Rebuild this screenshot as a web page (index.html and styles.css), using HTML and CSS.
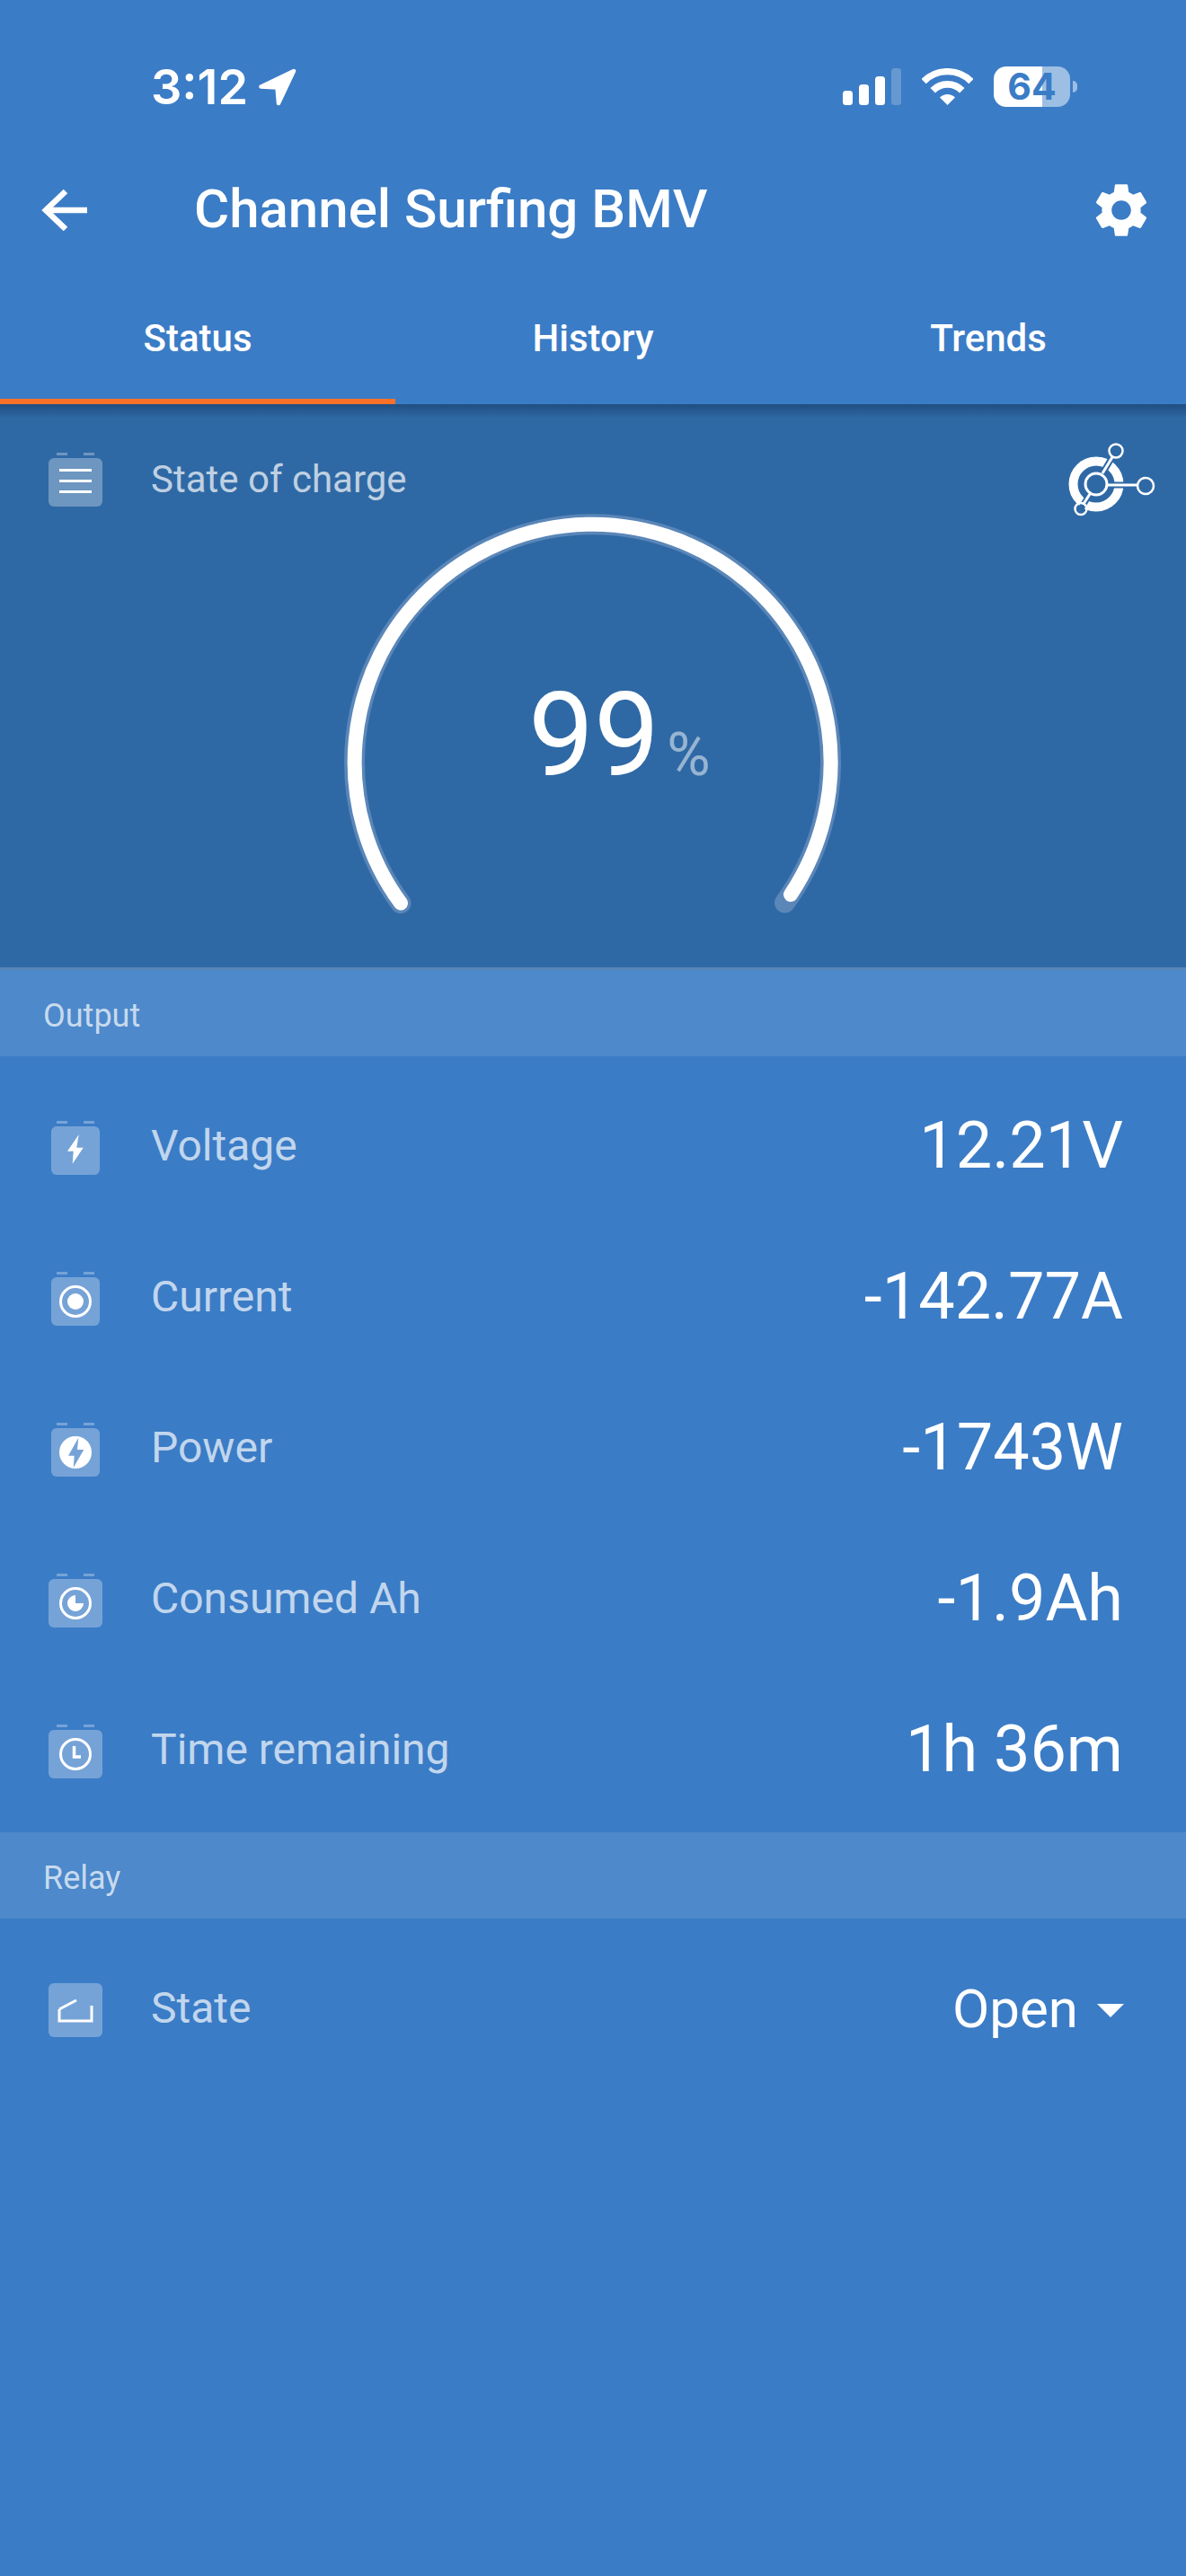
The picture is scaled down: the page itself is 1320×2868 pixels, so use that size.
FILE: index.html
```html
<!DOCTYPE html>
<html lang="en">
<head>
<meta charset="utf-8">
<title>Channel Surfing BMV</title>
<link rel="stylesheet" href="styles.css">
</head>
<body>
<div class="screen">
  <header class="topbar">
    <div class="statusbar">
      <div class="clock">
        <span class="time">3:12</span>
        <svg class="loc" width="42" height="42" viewBox="0 0 42 42"><path d="M39 3 2.500 20.500 20.500 21.500 22 39Z" fill="#fff" stroke="#fff" stroke-width="4.500" stroke-linejoin="round"/></svg>
      </div>
      <div class="sysicons">
        <div class="signal"><i class="b1"></i><i class="b2"></i><i class="b3"></i><i class="b4"></i></div>
        <svg class="wifi" width="57" height="41" viewBox="0 0 57 41"><g fill="none" stroke="#fff"><path d="M2.100 14.600A37.300 37.300 0 0 1 54.900 14.600" stroke-width="7.400"/><path d="M12.200 24.700A23 23 0 0 1 44.800 24.700" stroke-width="7.700"/></g><path d="M28.500 41 20 32.500A12 12 0 0 1 37 32.500Z" fill="#fff"/></svg>
        <div class="batt"><div class="batt-body"><span class="batt-num">64</span></div><div class="batt-nub"></div></div>
      </div>
    </div>
    <div class="appbar">
      <svg class="back" width="60" height="60" viewBox="0 0 60 60"><path d="M55 30H9M31 9 9 30l0 0 22 21" fill="none" stroke="#fff" stroke-width="6.500"/></svg>
      <h1 class="title">Channel Surfing BMV</h1>
      <svg class="gear" width="72" height="72" viewBox="0 0 24 24"><path fill="#fff" d="M19.140 12.940c.04-.3.06-.61.06-.94 0-.32-.02-.64-.07-.94l2.030-1.580c.18-.14.23-.41.12-.61l-1.920-3.320c-.12-.22-.37-.29-.59-.22l-2.390.96c-.5-.38-1.030-.7-1.620-.94l-.36-2.540c-.04-.24-.24-.41-.48-.41h-3.840c-.24 0-.43.17-.47.41l-.36 2.540c-.59.24-1.130.57-1.620.94l-2.390-.96c-.22-.08-.47 0-.59.22L2.740 8.870c-.12.21-.08.47.12.61l2.030 1.580c-.05.3-.09.63-.09.94s.02.64.07.94l-2.030 1.580c-.18.14-.23.41-.12.61l1.920 3.320c.12.22.37.29.59.22l2.390-.96c.5.38 1.030.7 1.620.94l.36 2.540c.05.24.24.41.48.41h3.840c.24 0 .44-.17.47-.41l.36-2.540c.59-.24 1.130-.56 1.620-.94l2.390.96c.22.08.47 0 .59-.22l1.920-3.320c.12-.22.07-.47-.12-.61l-2.010-1.580zM12 15.600c-1.980 0-3.600-1.620-3.600-3.600s1.620-3.600 3.600-3.600 3.600 1.620 3.600 3.600-1.620 3.600-3.600 3.600z"/></svg>
    </div>
    <nav class="tabs">
      <div class="tab tab-active">Status</div>
      <div class="tab">History</div>
      <div class="tab">Trends</div>
    </nav>
  </header>

  <section class="soc">
    <div class="soc-head">
      <div class="icon">
        <div class="terms"><i></i><i></i></div>
        <div class="box box-wide box-lines"><i></i><i></i><i></i></div>
      </div>
      <span class="label">State of charge</span>
    </div>
    <svg class="logo" width="100" height="90" viewBox="0 0 100 90">
      <circle cx="34" cy="49" r="25.500" fill="none" stroke="#fff" stroke-width="10"/>
      <g fill="none" stroke="#2f69a5" stroke-width="7">
        <path d="M34 49 56 12"/><path d="M34 50H89"/><path d="M34 49 16.500 77"/>
      </g>
      <g fill="none" stroke="#fff">
        <path d="M41 37 52 19" stroke-width="3"/><path d="M47 50H80" stroke-width="3"/><path d="M27 60 20 71" stroke-width="3"/>
        <circle cx="34" cy="49" r="12" stroke-width="3"/>
        <circle cx="56" cy="12" r="7.500" stroke-width="2.500"/>
        <circle cx="89" cy="51" r="9" stroke-width="2.500"/>
        <circle cx="17" cy="76.500" r="6.500" stroke-width="2.500"/>
      </g>
    </svg>
    <div class="gauge">
      <svg width="600" height="480" viewBox="0 0 600 480">
        <path d="M86 441.600A265 265 0 1 1 513.500 441" fill="none" stroke="#5a86b8" stroke-width="23" stroke-linecap="round"/>
        <path d="M86 441.600A265 265 0 1 1 520 432" fill="none" stroke="#fff" stroke-width="16" stroke-linecap="round"/>
      </svg>
      <div class="gauge-value"><span class="pct-num">99</span><span class="pct-unit">%</span></div>
    </div>
  </section>

  <div class="band">Output</div>
  <section class="list">
    <div class="row">
      <div class="icon">
        <div class="terms"><i></i><i></i></div>
        <div class="box"><svg width="54" height="54" viewBox="0 0 54 54"><path d="M30.700 9.300 18 27.700h6.700l-1 14 12-18h-7.400z" fill="#fff"/></svg></div>
      </div>
      <span class="label">Voltage</span>
      <span class="value">12.21V</span>
    </div>
    <div class="row">
      <div class="icon">
        <div class="terms"><i></i><i></i></div>
        <div class="box"><svg width="54" height="54" viewBox="0 0 54 54"><circle cx="27" cy="27" r="16.500" fill="none" stroke="#fff" stroke-width="3"/><circle cx="27" cy="27" r="9" fill="#fff"/></svg></div>
      </div>
      <span class="label">Current</span>
      <span class="value">-142.77A</span>
    </div>
    <div class="row">
      <div class="icon">
        <div class="terms"><i></i><i></i></div>
        <div class="box"><svg width="54" height="54" viewBox="0 0 54 54"><circle cx="27" cy="27" r="18" fill="#fff"/><path d="M30.300 10.700 19 30.700h6.700L24.700 44l11.600-20H29z" fill="#76a3d7"/></svg></div>
      </div>
      <span class="label">Power</span>
      <span class="value">-1743W</span>
    </div>
    <div class="row">
      <div class="icon">
        <div class="terms"><i></i><i></i></div>
        <div class="box box-wide"><svg width="60" height="54" viewBox="0 0 60 54"><circle cx="30" cy="27" r="16.500" fill="none" stroke="#fff" stroke-width="3"/><path d="M30 27v-9a9 9 0 1 0 9 9z" fill="#fff"/></svg></div>
      </div>
      <span class="label">Consumed Ah</span>
      <span class="value">-1.9Ah</span>
    </div>
    <div class="row">
      <div class="icon">
        <div class="terms"><i></i><i></i></div>
        <div class="box box-wide"><svg width="60" height="54" viewBox="0 0 60 54"><circle cx="30" cy="27" r="16.500" fill="none" stroke="#fff" stroke-width="3"/><path d="M28.500 18v12H36" fill="none" stroke="#fff" stroke-width="3.500"/></svg></div>
      </div>
      <span class="label">Time remaining</span>
      <span class="value">1h 36m</span>
    </div>
  </section>

  <div class="band">Relay</div>
  <section class="list">
    <div class="row">
      <div class="icon">
        <div class="box box-wide box-tall"><svg width="60" height="60" viewBox="0 0 60 60"><path d="M12 29V42H48V25M12 29 31 19" fill="none" stroke="#fff" stroke-width="3"/></svg></div>
      </div>
      <span class="label">State</span>
      <span class="value value-select">Open</span>
      <i class="caret"></i>
    </div>
  </section>
</div>
</body>
</html>
```
FILE: styles.css
```css
* { box-sizing: border-box; }
html, body { margin: 0; padding: 0; }
body {
  width: 1320px;
  min-height: 2868px;
  background: #3b7cc6;
  font-family: Roboto, "Noto Sans", sans-serif;
  color: #fff;
}
.screen { width: 1320px; min-height: 2868px; background: #3b7cc6; }

.statusbar {
  height: 168px;
  display: flex;
  justify-content: space-between;
  align-items: flex-start;
  padding: 74px 121px 0 168px;
}
.clock { display: flex; align-items: center; gap: 12px; height: 46px; }
.time { font-family: Inter, sans-serif; font-weight: 600; font-size: 54px; line-height: 46px; }
.sysicons { display: flex; align-items: flex-end; height: 45px; }
.signal { display: flex; align-items: flex-end; gap: 7px; height: 41px; margin-right: 23px; margin-bottom: 2px; }
.signal i { display: block; width: 11px; background: #fff; border-radius: 3.500px; }
.signal .b1 { height: 16px; }
.signal .b2 { height: 23px; }
.signal .b3 { height: 32px; }
.signal .b4 { height: 41px; background: rgba(255,255,255,.22); }
.wifi { margin-right: 23px; margin-bottom: 2px; }
.batt { display: flex; align-items: center; }
.batt-body {
  width: 85px;
  height: 45px;
  border-radius: 14px;
  background: linear-gradient(to right, #fff 54px, #9dbfe3 54px);
  text-align: center;
}
.batt-num { display: block; font-family: Inter, sans-serif; font-weight: 700; font-size: 41px; line-height: 45px; color: #3b7cc6; }
.batt-nub { width: 5px; height: 13px; margin-left: 3px; background: rgba(255,255,255,.5); border-radius: 0 5px 5px 0; }

.appbar { position: relative; height: 132px; display: flex; align-items: center; padding-left: 42px; }
.back { flex: none; }
.title { margin: 0 0 2px 114px; font-size: 60px; font-weight: 500; line-height: 70px; flex: 1; }
.gear { flex: none; margin-right: 36px; }

.tabs { display: flex; height: 150px; }
.tab { flex: 1; display: flex; align-items: center; justify-content: center; font-size: 42px; font-weight: 500; border-bottom: 6px solid transparent; padding-top: 8px; }
.tab-active { border-bottom-color: #f97228; }

.soc {
  position: relative;
  height: 630px;
  background: linear-gradient(#204e80 0, #2f69a5 16px);
  border-bottom: 3px solid #5885b9;
  padding-top: 54px;
}
.soc-head { display: flex; align-items: center; height: 60px; padding-left: 54px; }
.soc-head .label { margin-left: 54px; margin-bottom: 2px; font-size: 42px; flex: none; }
.logo { position: absolute; right: 34px; top: 40px; }
.gauge { position: relative; width: 600px; height: 480px; margin: 0 auto; }
.gauge svg { display: block; }
.gauge-value { position: absolute; left: 228px; top: 179px; display: flex; align-items: baseline; gap: 8px; }
.pct-num { font-size: 130px; line-height: 152px; }
.pct-unit { font-size: 66px; line-height: 76px; color: rgba(255,255,255,.5); }

.band {
  height: 96px;
  display: flex;
  align-items: center;
  padding: 5px 0 0 48px;
  background: #4d89cb;
  color: rgba(255,255,255,.7);
  font-size: 36px;
}

.list { padding: 18px 0 6px; }
.row { height: 168px; display: flex; align-items: center; padding: 0 70px 0 54px; }
.icon { width: 60px; height: 60px; flex: none; display: flex; flex-direction: column; align-items: center; }
.terms { display: flex; justify-content: space-between; width: 42px; height: 3px; margin-bottom: 3px; }
.terms i { display: block; width: 12px; height: 3px; background: rgba(255,255,255,.3); }
.box { width: 54px; height: 54px; border-radius: 6px; background: rgba(255,255,255,.3); }
.box svg { display: block; }
.box-wide { width: 60px; }
.box-tall { height: 60px; }
.box-lines { display: flex; flex-direction: column; align-items: center; gap: 9px; padding-top: 12px; }
.box-lines i { display: block; width: 36px; height: 3px; background: #fff; }
.label { margin-left: 54px; margin-bottom: 5px; font-size: 48px; color: rgba(255,255,255,.7); flex: 1; }
.value { font-size: 72px; margin-bottom: 5px; }
.value-select { font-size: 60px; margin-bottom: 3px; margin-right: 21px; }
.caret { width: 0; height: 0; margin-right: -1px; border-left: 15px solid transparent; border-right: 15px solid transparent; border-top: 15px solid #fff; }
```
